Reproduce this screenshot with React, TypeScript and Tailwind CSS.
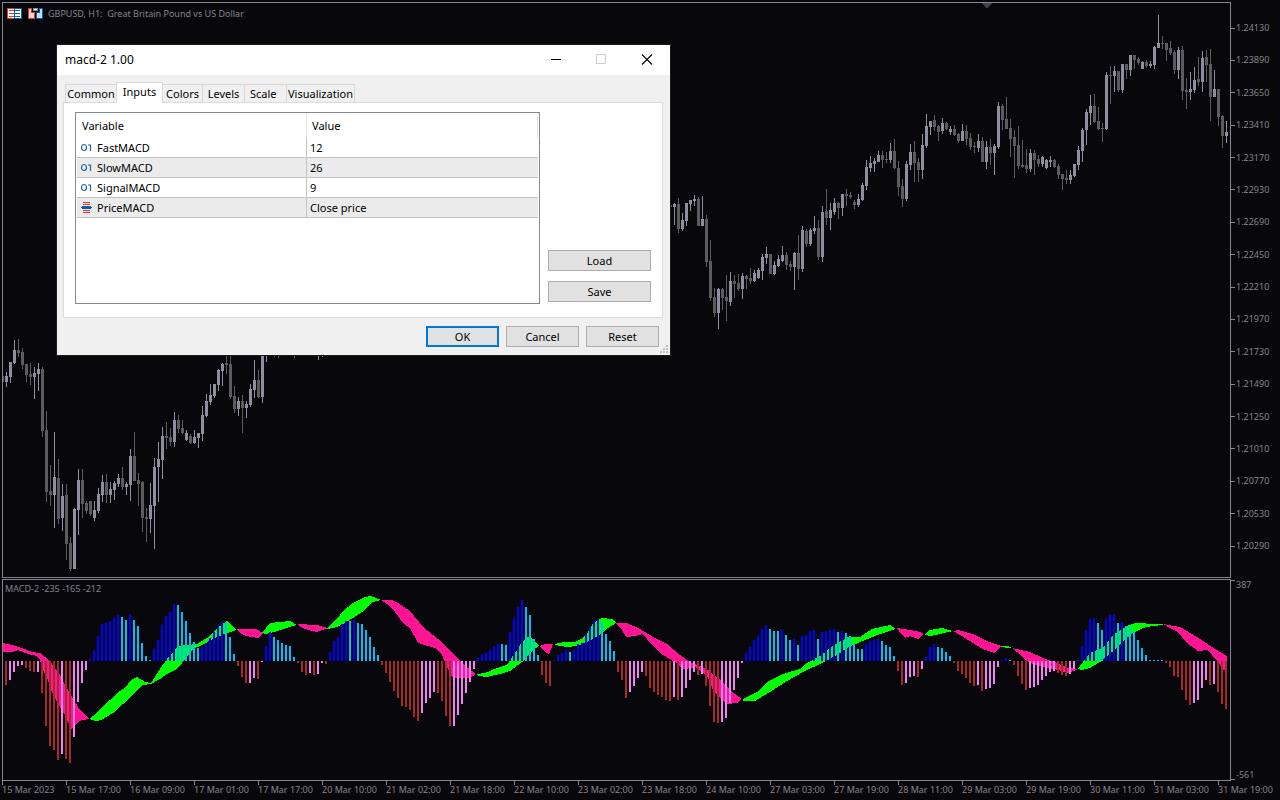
import { useState } from "react";

// [high, body top, body bottom, low, rising]
type Candle = [number, number, number, number, number];

const STEP = 4;

const earlyCandles: Candle[] = [
  [376, 376, 382, 382, 0], [372, 376, 382, 387, 1], [362, 362, 377, 383, 1], [340, 350, 363, 364, 1],
  [339, 350, 353, 357, 0], [348, 352, 365, 369, 0], [364, 364, 375, 382, 0], [363, 374, 377, 385, 0],
  [367, 373, 377, 399, 1], [363, 369, 374, 391, 1], [367, 369, 431, 437, 0], [411, 430, 492, 502, 0],
  [465, 491, 495, 506, 0], [432, 477, 495, 528, 1], [459, 478, 519, 524, 0], [484, 496, 518, 531, 1],
  [484, 495, 544, 560, 0], [537, 543, 569, 571, 0], [508, 509, 569, 569, 1], [469, 480, 510, 535, 1],
  [469, 480, 504, 518, 0], [501, 503, 511, 514, 0], [501, 501, 514, 516, 0], [501, 510, 518, 521, 1],
  [488, 494, 511, 513, 1], [475, 482, 495, 502, 1], [474, 482, 495, 503, 0], [482, 489, 495, 503, 1],
  [481, 483, 490, 500, 1], [474, 478, 484, 487, 1], [467, 478, 487, 490, 0], [482, 484, 487, 495, 1],
  [449, 456, 485, 501, 1], [432, 456, 481, 481, 0], [473, 480, 484, 506, 0], [481, 482, 518, 532, 0],
  [508, 517, 519, 542, 0], [483, 505, 519, 533, 1], [458, 467, 506, 549, 1], [442, 459, 467, 502, 1],
  [427, 436, 460, 479, 1], [422, 436, 438, 449, 0], [428, 437, 442, 446, 0], [412, 420, 442, 447, 1],
  [415, 420, 429, 433, 0], [420, 428, 433, 434, 0], [430, 433, 440, 441, 1], [434, 436, 443, 444, 0],
  [430, 437, 443, 444, 1], [433, 433, 438, 448, 1], [406, 415, 434, 441, 1], [394, 401, 416, 417, 1],
  [384, 395, 402, 405, 1], [384, 384, 396, 398, 1], [369, 370, 385, 391, 1], [363, 364, 371, 386, 1],
  [350, 363, 365, 374, 0], [350, 364, 397, 399, 0], [386, 396, 409, 413, 0], [397, 401, 409, 416, 1],
  [395, 401, 408, 433, 0], [401, 404, 408, 418, 1], [384, 389, 405, 407, 1], [360, 380, 390, 398, 1],
  [370, 380, 397, 398, 0], [345, 350, 397, 403, 1], [345, 346, 350, 362, 1], [340, 342, 350, 352, 0],
  [340, 345, 356, 357, 0], [340, 345, 356, 358, 0], [336, 340, 348, 352, 1], [332, 338, 346, 350, 0],
  [330, 336, 344, 350, 1], [332, 338, 348, 358, 0], [330, 336, 346, 350, 1], [328, 334, 342, 348, 0],
  [328, 332, 340, 346, 1], [326, 332, 342, 348, 0], [328, 334, 344, 350, 1], [330, 338, 350, 360, 1],
  [332, 338, 348, 357, 1],
];

const lateCandles: Candle[] = [
  [199, 205, 207, 209, 0], [203, 204, 207, 225, 1], [198, 204, 229, 233, 0], [213, 220, 229, 231, 1],
  [203, 203, 221, 226, 1], [200, 200, 204, 211, 1], [195, 199, 201, 206, 1], [197, 199, 226, 226, 0],
  [196, 219, 226, 226, 1], [215, 219, 262, 267, 0], [240, 261, 298, 301, 0], [288, 297, 313, 317, 0],
  [288, 289, 313, 329, 1], [288, 289, 298, 310, 0], [275, 297, 301, 321, 0], [272, 281, 302, 306, 1],
  [275, 281, 284, 298, 0], [274, 283, 289, 291, 0], [273, 276, 289, 299, 1], [275, 276, 279, 289, 0],
  [268, 278, 281, 284, 0], [270, 273, 281, 282, 1], [268, 270, 278, 279, 1], [254, 257, 271, 280, 1],
  [247, 254, 258, 264, 1], [254, 254, 274, 274, 0], [261, 265, 274, 275, 1], [255, 259, 266, 267, 1],
  [246, 255, 261, 262, 1], [252, 255, 265, 270, 0], [261, 264, 267, 271, 0], [252, 253, 267, 290, 1],
  [235, 253, 269, 280, 0], [226, 230, 269, 272, 1], [229, 231, 244, 247, 0], [228, 230, 244, 246, 1],
  [216, 228, 231, 234, 1], [220, 228, 257, 260, 0], [206, 212, 257, 262, 1], [189, 211, 218, 225, 0],
  [203, 210, 218, 230, 1], [198, 203, 212, 215, 1], [202, 203, 208, 219, 0], [194, 194, 208, 216, 1],
  [189, 194, 196, 206, 0], [192, 195, 197, 199, 0], [200, 202, 205, 209, 0], [194, 199, 205, 207, 1],
  [183, 185, 200, 201, 1], [160, 167, 186, 190, 1], [156, 163, 168, 172, 1], [158, 161, 164, 172, 1],
  [151, 155, 162, 162, 1], [151, 155, 160, 168, 0], [152, 159, 160, 163, 0], [143, 151, 160, 163, 1],
  [139, 151, 168, 169, 0], [161, 168, 187, 196, 0], [179, 186, 199, 207, 0], [161, 164, 199, 201, 1],
  [144, 152, 165, 170, 1], [141, 152, 163, 182, 0], [158, 162, 170, 182, 0], [134, 145, 170, 179, 1],
  [114, 126, 146, 148, 1], [121, 121, 127, 135, 1], [115, 120, 127, 131, 0], [125, 126, 132, 141, 0],
  [118, 123, 131, 134, 1], [122, 123, 129, 130, 0], [126, 129, 132, 135, 1], [125, 129, 135, 136, 0],
  [133, 134, 141, 143, 0], [124, 131, 141, 141, 1], [125, 131, 139, 145, 0], [133, 138, 147, 150, 0],
  [142, 146, 147, 153, 0], [134, 141, 148, 152, 1], [137, 141, 162, 162, 0], [141, 147, 162, 169, 1],
  [139, 147, 153, 165, 0], [144, 146, 153, 175, 1], [102, 106, 147, 149, 1], [104, 106, 120, 130, 0],
  [97, 119, 129, 129, 0], [119, 128, 139, 157, 0], [130, 137, 146, 178, 0], [126, 145, 166, 169, 0],
  [140, 165, 167, 168, 0], [149, 165, 169, 173, 0], [149, 153, 169, 172, 1], [150, 153, 160, 175, 0],
  [155, 159, 164, 167, 0], [156, 157, 164, 167, 1], [159, 160, 168, 169, 1], [156, 160, 162, 167, 1],
  [159, 160, 167, 168, 0], [164, 166, 175, 179, 0], [174, 174, 179, 190, 0], [170, 178, 180, 184, 0],
  [170, 175, 180, 184, 1], [164, 164, 176, 177, 1], [146, 150, 165, 170, 1], [128, 130, 151, 162, 1],
  [109, 112, 130, 145, 1], [95, 106, 113, 125, 1], [94, 106, 122, 123, 0], [107, 121, 129, 130, 0],
  [123, 128, 129, 142, 0], [72, 75, 129, 130, 1], [66, 75, 76, 104, 0], [66, 71, 76, 92, 1],
  [71, 71, 90, 92, 0], [64, 64, 90, 93, 1], [64, 64, 70, 79, 0], [55, 55, 70, 76, 1],
  [55, 55, 60, 69, 0], [57, 59, 63, 65, 0], [61, 62, 69, 69, 1], [60, 62, 66, 68, 0],
  [61, 64, 66, 68, 1], [46, 47, 65, 69, 1], [15, 43, 48, 48, 1], [36, 43, 44, 49, 0],
  [43, 43, 50, 61, 0], [41, 48, 53, 55, 0], [50, 52, 70, 74, 0], [47, 50, 70, 79, 1],
  [46, 50, 91, 100, 0], [78, 90, 92, 109, 0], [72, 89, 92, 100, 1], [67, 80, 90, 93, 1],
  [57, 79, 82, 86, 0], [51, 58, 82, 92, 1], [50, 57, 65, 82, 0], [49, 64, 97, 121, 0],
  [70, 89, 97, 97, 1], [89, 89, 117, 126, 0], [115, 116, 136, 148, 0], [121, 132, 136, 143, 1],
];

const histogram = [
  -24, -19, -11, -5, -4, -7, -10, -11, -11, -32, -65, -85, -89, -99, -93, -98, -102, -76, -41, -22, -9,
  2, 11, 25, 37, 38, 40, 43, 46, 44, 41, 47, 41, 35, 18, 5, 1, 12, 21, 36, 45, 49, 57, 56, 49, 40, 28,
  19, 13, 14, 18, 23, 29, 35, 39, 39, 24, 7, -5, -16, -22, -22, -17, -18, -1, 15, 29, 24, 21, 18, 16,
  15, 4, -2, -11, -14, -12, -14, -13, -2, -3, 9, 20, 24, 37, 40, 40, 41, 38, 37, 31, 24, 14, 6, -4, -12,
  -21, -30, -37, -45, -46, -49, -56, -60, -52, -42, -37, -31, -32, -40, -55, -65, -65, -54, -43, -32,
  -21, -8, 3, 7, 8, 11, 15, 17, 17, 16, 29, 43, 54, 61, 54, 46, 22, 6, -14, -22, -25, 1, 6, 8, 11, 9,
  11, 17, 18, 27, 34, 40, 41, 39, 27, 20, 10, -11, -19, -37, -31, -25, -17, -11, -15, -27, -31, -34,
  -36, -39, -40, -36, -39, -36, -27, -19, -11, -14, -13, -25, -45, -61, -62, -61, -57, -42, -29, -17,
  -2, 8, 14, 21, 25, 32, 36, 32, 30, 30, 31, 26, 21, 22, 16, 25, 26, 30, 31, 22, 29, 30, 31, 32, 29, 30,
  28, 25, 17, 12, 12, 17, 20, 21, 22, 20, 16, 14, 5, -10, -24, -22, -16, -15, -16, -8, 4, 14, 17, 14,
  13, 9, 5, -2, -10, -13, -17, -22, -25, -24, -30, -28, -27, -23, -6, 1, 3, 1, -4, -15, -23, -29, -27,
  -26, -24, -19, -15, -11, -10, -12, -14, -15, -13, -8, 1, 15, 31, 42, 43, 38, 31, 42, 46, 47, 38, 39,
  35, 34, 29, 21, 13, 6, 1, 1, 1, 1, -2, -6, -15, -16, -29, -39, -44, -42, -39, -27, -19, -24, -23, -31,
  -43, -48,
];

const fallingRibbons = [
  "2,643 12,645 22,648 32,652 40,653 50,661 60,675 65,685 72,697 80,710 89,718 89,719 82,720 77,723 71,729 65,715 57,702 52,692 47,677 43,670 40,660 37,656 28,654 18,650 12,652 2,652",
  "236,629 256,629 263,633 258,638 246,636 240,633",
  "297,624 317,625 328,628 325,629 317,632 308,630 301,627",
  "381,600 392,600 398,603 410,611 423,627 438,639 448,649 460,661 468,668 476,674 470,678 453,678 450,673 447,667 442,655 435,648 418,643 410,628 403,623 395,612 387,604",
  "540,646 545,644 553,644 549,654 544,651",
  "616,623 627,623 640,629 653,637 667,644 680,655 690,662 702,667 708,670 718,678 727,687 735,694 742,699 737,703 727,704 720,698 713,690 708,678 702,672 695,667 685,669 681,668 675,662 663,655 652,645 643,634 635,636 626,637 622,630",
  "897,628 910,630 920,632 924,634 918,639 910,636 905,638 902,635",
  "953,631 958,630 973,634 987,641 1001,646 994,653 983,649 973,643 962,636",
  "1012,648 1030,652 1043,658 1057,663 1068,668 1078,669 1069,673 1058,670 1040,666 1030,663 1023,658 1017,652",
  "1163,624 1180,627 1197,637 1212,647 1227,656 1227,664 1224,671 1218,662 1212,655 1207,650 1198,651 1187,643 1178,632 1170,628",
];

const risingRibbons = [
  "90,718 95,715 100,709 110,700 120,691 126,687 131,680 137,677 145,682 151,683 160,669 167,659 173,652 178,646 197,644 207,638 217,628 227,621 236,630 230,632 222,635 213,639 202,645 193,649 187,657 182,663 175,670 167,674 160,679 151,684 143,685 133,694 123,704 113,713 103,719 97,721 91,720",
  "262,633 270,623 290,621 297,625 286,628 278,631 266,634",
  "327,628 338,618 342,612 353,603 365,597 371,596 381,600 373,602 367,607 362,612 353,618 343,624 337,627 327,629",
  "477,674 485,673 497,668 507,665 512,657 517,650 522,642 528,637 533,639 539,646 532,651 527,657 522,662 510,671 500,674 487,677 478,676",
  "554,644 565,642 575,642 583,638 588,632 593,623 602,618 612,619 616,623 608,628 598,636 587,642 577,646 567,647 555,645",
  "743,699 757,692 767,682 783,674 800,669 807,663 820,656 833,646 848,637 860,637 872,629 890,625 896,629 880,634 860,642 847,648 837,655 822,663 803,672 787,681 770,692 755,701 743,701",
  "925,634 930,630 942,628 953,631 940,634 930,636 925,635",
  "1001,646 1008,646 1012,648 1009,648 1001,647",
  "1078,669 1083,662 1090,653 1103,648 1113,635 1127,626 1135,623 1143,623 1148,624 1163,624 1163,625 1152,626 1143,628 1133,633 1122,642 1112,652 1100,662 1090,668 1082,670",
];

const prices = [
  "1.24130", "1.23890", "1.23650", "1.23410", "1.23170", "1.22930", "1.22690", "1.22450", "1.22210",
  "1.21970", "1.21730", "1.21490", "1.21250", "1.21010", "1.20770", "1.20530", "1.20290",
];

const times = [
  "15 Mar 2023", "15 Mar 17:00", "16 Mar 09:00", "17 Mar 01:00", "17 Mar 17:00", "20 Mar 10:00",
  "21 Mar 02:00", "21 Mar 18:00", "22 Mar 10:00", "23 Mar 02:00", "23 Mar 18:00", "24 Mar 10:00",
  "27 Mar 03:00", "27 Mar 19:00", "28 Mar 11:00", "29 Mar 03:00", "29 Mar 19:00", "30 Mar 11:00",
  "31 Mar 03:00", "31 Mar 19:00",
];

const tabs = [
  { name: "Common", layout: "w-[51px] text-center" },
  { name: "Inputs", layout: "w-[47px] text-center" },
  { name: "Colors", layout: "w-10 text-center" },
  { name: "Levels", layout: "w-[42px] text-center" },
  { name: "Scale", layout: "w-[42px] pl-[5px] text-left" },
  { name: "Visualization", layout: "w-[68px] text-center" },
];

const inputs = [
  { name: "FastMACD", value: "12", kind: "number" },
  { name: "SlowMACD", value: "26", kind: "number" },
  { name: "SignalMACD", value: "9", kind: "number" },
  { name: "PriceMACD", value: "Close price", kind: "price" },
];

function Candles({ data, start }: { data: Candle[]; start: number }) {
  return (
    <g>
      {data.map(([high, top, bottom, low, rising], i) => {
        const x = (start + i) * STEP + 2;
        return (
          <g key={i} fill={rising ? "#8e8f9c" : "#5c5c60"}>
            <rect x={x} y={high} width={1} height={low - high} />
            <rect x={x - 1} y={top} width={3} height={bottom - top} />
          </g>
        );
      })}
    </g>
  );
}

function barColor(value: number, previous: number) {
  if (value >= 0) return value > previous ? "#0000ff" : "#00bfff";
  return value < previous ? "#a52a2a" : "#ee82ee";
}

function PriceChart() {
  return (
    <svg
      className="block h-full w-full"
      viewBox="3 3 1227 574"
      preserveAspectRatio="none"
      shapeRendering="crispEdges"
    >
      <path d="M981 3h11l-5 5h-1z" fill="#3e414c" />
      <Candles data={earlyCandles} start={0} />
      <Candles data={lateCandles} start={167} />
    </svg>
  );
}

function MacdChart() {
  return (
    <svg
      className="block h-full w-full"
      viewBox="3 580 1227 200"
      preserveAspectRatio="none"
      shapeRendering="crispEdges"
    >
      {fallingRibbons.map((points) => (
        <polygon key={points} points={points} fill="#ff1493" />
      ))}
      {risingRibbons.map((points) => (
        <polygon key={points} points={points} fill="#00ff00" />
      ))}
      {histogram.map((value, i) => (
        <rect
          key={i}
          x={(i + 1) * STEP + 1}
          y={value > 0 ? 661 - value : 661}
          width={2}
          height={Math.abs(value)}
          fill={barColor(value, histogram[i - 1] ?? 0)}
        />
      ))}
    </svg>
  );
}

function DepthIcon() {
  return (
    <svg width="15" height="12" viewBox="0 0 15 12" shapeRendering="crispEdges">
      <path d="M0 0h7v11H0z" fill="#e0382f" />
      <path d="M7 0h8v11H7z" fill="#0a5ea8" />
      <path d="M1 1h6v9H1zM8 1h6v9H8z" fill="#fff" />
      <path d="M2 2h5v1H2zM2 5h5v1H2zM2 8h5v1H2z" fill="#e0382f" />
      <path d="M8 2h5v1H8zM8 5h5v1H8zM8 8h5v1H8z" fill="#0a5ea8" />
    </svg>
  );
}

function TradeIcon() {
  return (
    <svg width="15" height="12" viewBox="0 0 15 12" shapeRendering="crispEdges">
      <path d="M0 0h4v4h3v7H0z" fill="#e0382f" />
      <path d="M1 1h2v4h3v5H1z" fill="#ffd3cf" />
      <path d="M11 0h4v11H8V4h3z" fill="#0a5ea8" />
      <path d="M12 1h2v9H9V5h3z" fill="#b9e2ff" />
      <path d="M5 0h5v3H5z" fill="#8c8c8c" />
      <path d="M6 1h3v1H6z" fill="#f4f4f4" />
    </svg>
  );
}

function NumberIcon() {
  return (
    <svg width="12" height="10" viewBox="0 0 12 10" fill="none" stroke="#1f689f" strokeWidth="1.2">
      <ellipse cx="3" cy="4.500" rx="2.500" ry="3" />
      <path d="M7 2h2.500v6" />
    </svg>
  );
}

function PriceIcon() {
  return (
    <svg width="12" height="12" viewBox="0 0 12 12" shapeRendering="crispEdges">
      <path d="M2 0h7v1H2zM2 2h7v1H2zM2 8h7v1H2zM2 10h7v1H2z" fill="#e0382f" />
      <path d="M1 4h9v1H1zM0 5h11v1H0zM1 6h9v1H1z" fill="#0a5ea8" />
    </svg>
  );
}

function DialogButton({ label, wide, primary }: { label: string; wide?: boolean; primary?: boolean }) {
  return (
    <button
      type="button"
      className={`flex h-[21px] items-center justify-center bg-[#e1e1e1] ${
        wide ? "w-[103px]" : "w-[73px]"
      } ${primary ? "border-2 border-[#0078d7]" : "border border-[#adadad]"}`}
    >
      {label}
    </button>
  );
}

function InputsTable() {
  return (
    <div className="h-48 flex-1 border border-[#828790] bg-white px-px">
      <table className="w-full table-fixed border-separate border-spacing-0 text-left">
        <thead>
          <tr>
            <th className="h-[25px] w-[230px] border-r border-[#e5e5e5] p-0 pl-[5px] font-normal">Variable</th>
            <th className="h-[25px] border-r border-[#e5e5e5] p-0 pl-[5px] font-normal">Value</th>
          </tr>
        </thead>
        <tbody>
          {inputs.map((input) => (
            <tr key={input.name} className="even:bg-[#ebebeb]">
              <td className="h-5 border-r border-b border-[#c3c3c3] p-0 pt-px pl-1">
                <span className="flex items-center gap-1">
                  {input.kind === "number" ? <NumberIcon /> : <PriceIcon />}
                  {input.name}
                </span>
              </td>
              <td className="h-5 border-b border-[#c3c3c3] p-0 pt-px pl-[3px]">{input.value}</td>
            </tr>
          ))}
        </tbody>
      </table>
    </div>
  );
}

function IndicatorDialog() {
  const [active, setActive] = useState("Inputs");

  return (
    <div
      role="dialog"
      aria-labelledby="dialog-title"
      className="absolute top-[44px] left-[56px] w-[615px] border border-[#1c1c1c] bg-[#f0f0f0] font-['Noto_Sans','Open_Sans',sans-serif] text-[11px] leading-4 text-black"
    >
      <div className="flex h-[30px] items-center bg-white pl-2">
        <h1 id="dialog-title" className="flex-1 text-[12px]">
          macd-2 1.00
        </h1>
        <button type="button" aria-label="Minimize" className="flex h-full w-[45px] items-center justify-center">
          <svg width="11" height="12" viewBox="0 0 11 12" shapeRendering="crispEdges">
            <path d="M0 5h10v1H0z" />
          </svg>
        </button>
        <button
          type="button"
          aria-label="Maximize"
          disabled
          className="flex h-full w-[45px] items-center justify-center"
        >
          <svg width="11" height="12" viewBox="0 0 11 12" fill="none" stroke="#ccc">
            <path d="M.5.5h9v9h-9z" />
          </svg>
        </button>
        <button type="button" aria-label="Close" className="flex h-full w-[46px] items-center justify-center">
          <svg width="12" height="12" viewBox="0 0 12 12" fill="none" stroke="#000" strokeWidth="1.1">
            <path d="M1 .5l10 10M11 .5l-10 10" />
          </svg>
        </button>
      </div>

      <div className="pt-[7px] pr-[7px] pb-2 pl-[6px]">
        <div role="tablist" className="flex h-5 items-end pl-0.5">
          {tabs.map((tab) => (
            <button
              key={tab.name}
              type="button"
              role="tab"
              aria-selected={active === tab.name}
              onClick={() => setActive(tab.name)}
              className={`${tab.layout} shrink-0 ${
                active === tab.name
                  ? "relative -mb-px h-[21px] border-x border-t border-[#d9d9d9] bg-white pb-0.5"
                  : "h-[18px] border-t border-r border-[#d9d9d9] first:border-r-0 first:border-l"
              }`}
            >
              {tab.name}
            </button>
          ))}
        </div>

        <div role="tabpanel" className="flex h-[216px] border border-[#dcdcdc] bg-white pt-[9px] pr-[11px] pl-[11px]">
          <InputsTable />
          <div className="flex h-[190px] flex-col justify-end gap-[10px] pl-2">
            <DialogButton label="Load" wide />
            <DialogButton label="Save" wide />
          </div>
        </div>

        <div className="flex justify-end gap-[7px] pt-2 pr-1">
          <DialogButton label="OK" primary />
          <DialogButton label="Cancel" />
          <DialogButton label="Reset" />
        </div>
      </div>

      <svg
        className="absolute right-0.5 bottom-0.5"
        width="8"
        height="8"
        viewBox="0 0 8 8"
        fill="#bfbfbf"
        shapeRendering="crispEdges"
      >
        <path d="M6 0h2v2H6zM3 3h2v2H3zM6 3h2v2H6zM0 6h2v2H0zM3 6h2v2H3zM6 6h2v2H6z" />
      </svg>
    </div>
  );
}

export default function App() {
  return (
    <main className="relative flex h-screen flex-col overflow-hidden bg-[#08070c] pt-0.5 font-['Noto_Sans','Open_Sans',sans-serif] text-[9px] leading-4 text-[#85848e]">
      <section className="flex min-h-0 flex-1 pl-0.5">
        <div className="relative min-w-0 flex-1 border border-[#85848e]">
          <PriceChart />
          <div className="absolute top-[3px] left-1 flex items-center">
            <DepthIcon />
            <span className="pl-1.5">
              <TradeIcon />
            </span>
            <h2 className="pl-[5px] whitespace-pre">GBPUSD, H1:  Great Britain Pound vs US Dollar</h2>
          </div>
        </div>
        <div className="flex w-[49px] flex-col justify-between pt-[18px] pb-[24px]">
          {prices.map((price) => (
            <div key={price} className="flex items-center gap-px">
              <span className="h-px w-1 bg-[#85848e]" />
              {price}
            </div>
          ))}
        </div>
      </section>

      <section className="mt-px flex h-[202px] pl-0.5">
        <div className="relative min-w-0 flex-1 border border-[#85848e]">
          <MacdChart />
          <h2 className="absolute top-px left-0.5">MACD-2 -235 -165 -212</h2>
        </div>
        <div className="flex w-[49px] flex-col justify-between">
          <div className="pt-px">
            <span className="block h-px w-1 bg-[#85848e]" />
            <span className="block pl-[5px] leading-[8px]">387</span>
          </div>
          <div>
            <span className="block pl-[5px] leading-[8px]">-561</span>
            <span className="mb-px block h-px w-1 bg-[#85848e]" />
          </div>
        </div>
      </section>

      <footer className="flex h-[19px] items-start">
        {times.map((time) => (
          <div key={time} className="w-[5%] shrink-0 pl-0.5 whitespace-nowrap">
            <span className="block h-1 w-px bg-[#85848e]" />
            <span className="block leading-[10px]">{time}</span>
          </div>
        ))}
      </footer>

      <IndicatorDialog />
    </main>
  );
}
